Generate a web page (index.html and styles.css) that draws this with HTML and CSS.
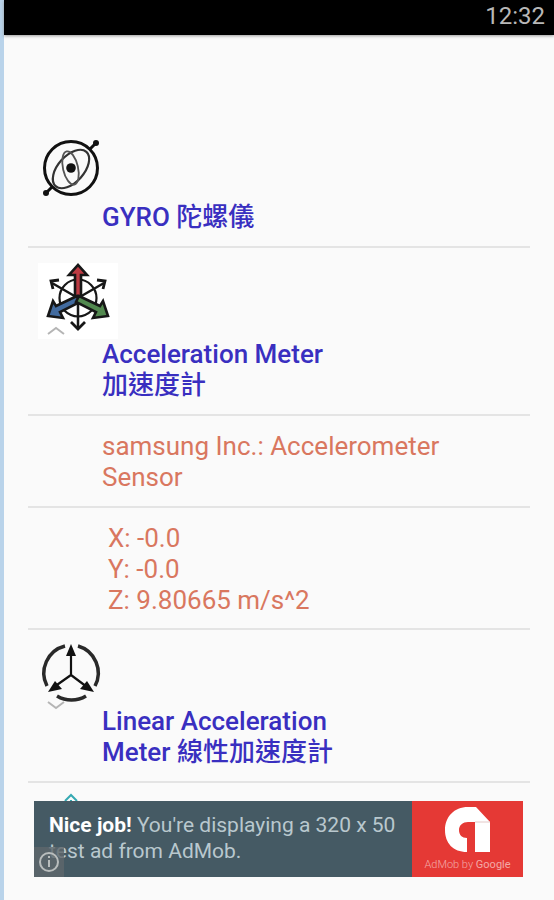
FILE: index.html
```html
<!DOCTYPE html>
<html lang="zh-Hant">
<head>
<meta charset="utf-8">
<meta name="viewport" content="width=device-width, initial-scale=1">
<title>Sensors</title>
<link rel="stylesheet" href="styles.css">
</head>
<body>
<div class="screen">
  <header class="status"><time>12:32</time></header>
  <main class="list">
    <section class="row group">
      <svg class="icon gyro" viewBox="0 0 68 64" fill="none" stroke="#111" aria-hidden="true">
        <circle cx="33" cy="30" r="26.5" stroke-width="3"/>
        <ellipse cx="33" cy="31" rx="23" ry="13" stroke-width="2.2" stroke="#333" transform="rotate(-48 33 31)"/>
        <ellipse cx="32.500" cy="30" rx="7.500" ry="17" stroke-width="1.800" stroke="#555" transform="rotate(-13 32.500 30)"/>
        <path d="M52 11l6-6M14 49l-6 6" stroke-width="3"/>
        <g fill="#111" stroke="none"><circle cx="33" cy="30" r="4.800"/><circle cx="58" cy="5" r="3"/><circle cx="8" cy="55" r="3"/></g>
      </svg>
      <h2 class="title">GYRO 陀螺儀</h2>
    </section>
    <section class="row group">
      <svg class="icon axes" viewBox="-2 1 80 76" fill="none" stroke="#171717" aria-hidden="true">
        <circle cx="38" cy="36" r="18.500" stroke-width="2.200"/>
        <path d="M38 36L12 21M38 36L64 21M38 36v30" stroke-width="2.500"/>
        <path d="M19 18l-8 1 2 8M57 18l8 1-2 8M31 60l7 7 7-7" stroke-width="2.800"/>
        <path d="M35 36V13h-6l9-10 9 10h-6v23z" fill="#bc3b43" stroke-width="2.600"/>
        <path d="M37 34L16 44l-3-5-5 15 15 2-3-6 20-10z" fill="#426b9f" stroke-width="2.600"/>
        <path d="M39 34l21 10 3-5 5 15-15 2 3-6-20-10z" fill="#52894f" stroke-width="2.600"/>
      </svg>
      <svg class="chevron" viewBox="0 0 18 9" aria-hidden="true"><path d="M1 8l8-6 8 6"/></svg>
      <h2 class="title">Acceleration Meter 加速度計</h2>
    </section>
    <p class="row text">samsung Inc.: Accelerometer Sensor</p>
    <p class="row text values">X: -0.0<br>Y: -0.0<br>Z: 9.80665 m/s^2</p>
    <section class="row group">
      <svg class="icon linear" viewBox="0 2 68 61" fill="none" stroke="#111" aria-hidden="true">
        <path d="M27 3A28 28 0 0 0 9 43M40 3a28 28 0 0 1 17 40M19 53a28 28 0 0 0 29 0" stroke="#292929" stroke-width="3.500"/>
        <path d="M33 32V9M33 32L16 44M33 32l16 12" stroke-width="2.200"/>
        <g fill="#111" stroke="none"><path d="M33 1l5 12H28z"/><path d="M10 49l7-11 7 8z"/><path d="M56 49l-7-11-7 8z"/></g>
      </svg>
      <svg class="chevron" viewBox="0 0 18 9" aria-hidden="true"><path d="M1 1l8 6 8-6"/></svg>
      <h2 class="title">Linear Acceleration Meter 線性加速度計</h2>
    </section>
    <section class="row group">
      <svg class="icon linear" viewBox="0 3 68 61" fill="none" stroke="#35a9b2" stroke-width="2" aria-hidden="true">
        <path d="M27 6l6-6 6 6M33 5v28"/>
      </svg>
    </section>
  </main>
  <a class="ad" href="#">
    <span class="ad-copy"><strong>Nice job!</strong> You're displaying a 320 x 50 test ad from AdMob.</span>
    <span class="brand">
      <svg class="logo" viewBox="0 0 48 46" aria-hidden="true">
        <path fill="#fff" d="M23 45C9 45 1 36 1 23S10 0 24 0h8l14 15v30H31V15h-7c-5 0-9 3-9 8s3 8 8 8z"/>
        <path d="M31 15h15" stroke="#e3c9c8"/>
      </svg>
      <span class="brand-name">AdMob by <b>Google</b></span>
    </span>
    <svg class="info" viewBox="0 0 30 30" fill="none" stroke="#b9bdbd" stroke-width="2" aria-hidden="true">
      <circle cx="15" cy="15" r="9"/><path d="M15 13v7M15 9v2"/>
    </svg>
  </a>
</div>
</body>
</html>
```
FILE: styles.css
```css
* {
  box-sizing: border-box;
}

body {
  margin: 0;
  background: #fafafa;
  font-family: Roboto, "Noto Sans CJK TC", sans-serif;
}

.screen {
  display: flex;
  flex-direction: column;
  height: 100vh;
  border-left: 4px solid #b9d3ea;
}

.status {
  flex: none;
  height: 35px;
  padding-right: 9px;
  background: #000;
  box-shadow: 0 1px 3px #999;
  color: #b8b8b8;
  font-size: 24px;
  line-height: 33px;
  text-align: right;
}

.list {
  flex: 1;
  min-height: 0;
  overflow: hidden;
  padding: 88px 24px 0;
}

.row {
  position: relative;
  margin: 0;
  padding: 15px 60px 13px 74px;
  border-bottom: 2px solid #e4e4e4;
  font-size: 26px;
  line-height: 31px;
}

.icon {
  display: block;
  overflow: visible;
  width: 68px;
  margin-left: -64px;
}

.gyro {
  height: 64px;
}

.axes {
  width: 80px;
  height: 76px;
  background: #fff;
}

.linear {
  height: 61px;
}

.chevron {
  position: absolute;
  left: 19px;
  top: 50%;
  width: 18px;
  height: 9px;
  margin-top: -5px;
  fill: none;
  stroke: #b5b5b5;
  stroke-width: 2;
}

.title {
  max-width: 240px;
  margin: 0;
  color: #392fc0;
  font-size: 26px;
  font-weight: 500;
}

.text {
  color: #d9775f;
}

.values {
  padding-bottom: 12px;
  padding-left: 80px;
}

.ad {
  position: relative;
  display: flex;
  flex: none;
  height: 76px;
  margin: 0 31px 23px 30px;
  background: #455a64;
  color: #b9c8ce;
  text-decoration: none;
}

.ad-copy {
  flex: 1;
  padding: 11px 0 0 15px;
  font-size: 21px;
  font-weight: 400;
  line-height: 26px;
}

.ad-copy strong {
  color: #fff;
  font-weight: 700;
}

.brand {
  display: flex;
  flex: none;
  flex-direction: column;
  align-items: center;
  width: 111px;
  padding-top: 6px;
  background: #e53935;
}

.logo {
  width: 48px;
  height: 46px;
}

.brand-name {
  margin-top: 4px;
  color: #f3a9a7;
  font-size: 11px;
  font-weight: 300;
  line-height: 16px;
}

.brand-name b {
  font-weight: 400;
}

.info {
  position: absolute;
  left: 0;
  bottom: 0;
  width: 30px;
  height: 30px;
  background: #5e666bcc;
}
```
